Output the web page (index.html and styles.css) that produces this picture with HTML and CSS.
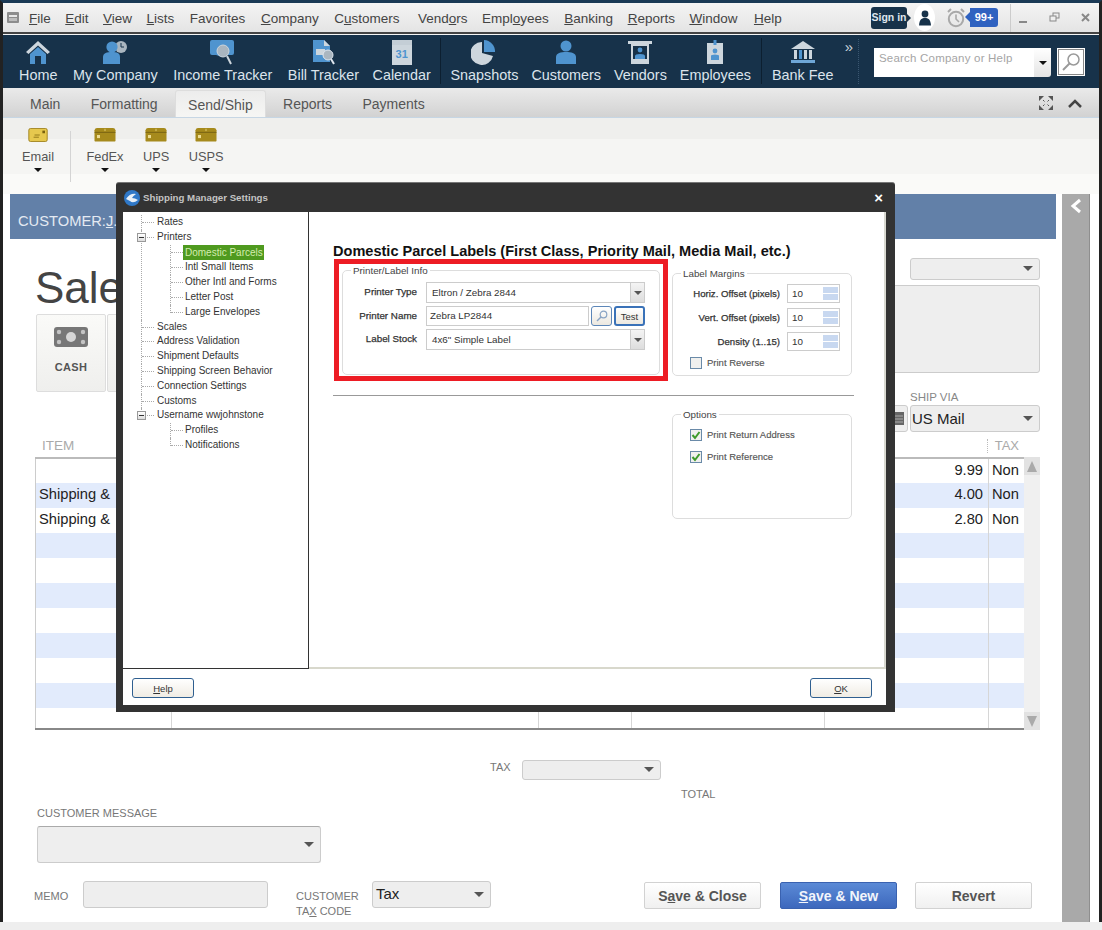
FILE: index.html
```html
<!DOCTYPE html>
<html lang="en">
<head>
    <meta charset="UTF-8">
    <title>Shipping Manager Settings</title>
    <link rel="stylesheet" href="styles.css">
</head>
<body>

<div class="window">
    <!-- menu bar -->
    <div class="menubar">
        <svg class="win-icon" width="12" height="11" viewBox="0 0 12 11"><rect width="12" height="11" rx="1" fill="#8d8d8d"/><rect x="2" y="3" width="8" height="2" fill="#e8e8e8"/><rect x="2" y="6" width="8" height="3" fill="#bdbdbd"/></svg>
        <nav class="menu">
            <span><u>F</u>ile</span>
            <span><u>E</u>dit</span>
            <span><u>V</u>iew</span>
            <span><u>L</u>ists</span>
            <span>Favorites</span>
            <span><u>C</u>ompany</span>
            <span>C<u>u</u>stomers</span>
            <span>Vend<u>o</u>rs</span>
            <span>Empl<u>o</u>yees</span>
            <span><u>B</u>anking</span>
            <span><u>R</u>eports</span>
            <span><u>W</u>indow</span>
            <span><u>H</u>elp</span>
        </nav>
        <div class="menu-right">
            <span class="signin">Sign in</span>
            <span class="avatar">
                <svg width="12" height="16" viewBox="0 0 12 16"><circle cx="6" cy="4" r="3.4" fill="#17324a"/><path d="M0 15.5 C0.5 9 3 8 6 8 S11.5 9 12 15.5 Z" fill="#17324a"/></svg>
            </span>
            <svg class="alarm" width="18" height="20" viewBox="0 0 18 20"><circle cx="9" cy="11" r="7.2" fill="none" stroke="#a9a9a9" stroke-width="2"/><path d="M9 6.5 V11 L12 14" fill="none" stroke="#a9a9a9" stroke-width="1.6"/><path d="M1 4 L4 1 M17 4 L14 1" stroke="#a9a9a9" stroke-width="2"/></svg>
            <span class="badge">99+</span>
            <span class="win-sep"></span>
            <svg class="win-btn" width="78" height="12" viewBox="0 0 78 12"><rect x="4" y="9" width="8" height="2" fill="#888"/><rect x="38" y="1" width="6" height="5" fill="none" stroke="#888"/><rect x="35" y="4" width="6" height="5" fill="#eee" stroke="#888"/><path d="M67 2 L74 9 M74 2 L67 9" stroke="#888" stroke-width="2"/></svg>
        </div>
    </div>

    <!-- icon bar -->
    <div class="iconbar">
        <div class="icon-group">
            <div class="tool">
                <svg width="26" height="25" viewBox="0 0 26 25"><path d="M13 1 L25 12 L22.5 14 L13 5.5 L3.5 14 L1 12 Z" fill="#cdd6dd"/><path d="M5 14 L13 7 L21 14 V24 H16 V16 H10 V24 H5 Z" fill="#4f94cf"/></svg>
                <span>Home</span>
            </div>
            <div class="tool">
                <svg width="26" height="25" viewBox="0 0 26 25"><circle cx="19" cy="7" r="6" fill="#aab6c0"/><path d="M19 3 V7 H22" stroke="#17324a" fill="none"/><circle cx="10" cy="7" r="5.6" fill="#4f94cf"/><path d="M1 24 V17 C1 13 5 12 10 12 S18 13 18 17 V24 Z" fill="#4f94cf"/></svg>
                <span>My Company</span>
            </div>
            <div class="tool">
                <svg width="26" height="25" viewBox="0 0 26 25"><path d="M2 0 H22 Q24 0 24 2 V13 Q24 15 22 15 H18 L12 17 L6 15 H2 Q0 15 0 13 V2 Q0 0 2 0 Z" fill="#4f94cf"/><circle cx="13" cy="11" r="6" fill="#aab6c0" stroke="#cdd6dd"/><path d="M17 16 L21 24" stroke="#cdd6dd" stroke-width="2"/></svg>
                <span>Income Tracker</span>
            </div>
            <div class="tool">
                <svg width="26" height="25" viewBox="0 0 26 25"><path d="M3 0 H14 L20 6 V22 H3 Z" fill="#4f94cf"/><path d="M14 0 L20 6 H14 Z" fill="#cdd6dd"/><rect x="6" y="9" width="9" height="6" fill="#cdd6dd"/><circle cx="18" cy="15" r="5" fill="#aab6c0" stroke="#dfe6ee"/><path d="M21 19 L24 24" stroke="#dfe6ee" stroke-width="2"/></svg>
                <span>Bill Tracker</span>
            </div>
            <div class="tool calendar">
                <div class="calendar-icon">31</div>
                <span>Calendar</span>
            </div>
            <div class="bar-sep"></div>
        </div>
        <div class="icon-group tight">
            <div class="tool">
                <svg width="26" height="25" viewBox="0 0 26 25"><path d="M11 2 A11.5 11.5 0 1 0 22 16 L11 13 Z" fill="#cdd6dd"/><path d="M13 0 A11.5 11.5 0 0 1 24 12 L13 12 Z" fill="#4f94cf"/></svg>
                <span>Snapshots</span>
            </div>
            <div class="tool">
                <svg width="26" height="25" viewBox="0 0 26 25"><circle cx="13" cy="6" r="5.5" fill="#4f94cf"/><path d="M3 24 V17 C3 13 8 12 13 12 S23 13 23 17 V24 Z" fill="#4f94cf"/></svg>
                <span>Customers</span>
            </div>
            <div class="tool">
                <svg width="26" height="25" viewBox="0 0 26 25"><rect x="1" y="1" width="24" height="3" fill="#cdd6dd"/><rect x="4" y="4" width="18" height="20" fill="#cdd6dd"/><rect x="6" y="6" width="14" height="13" fill="#17324a"/><circle cx="13" cy="10" r="2.4" fill="#4f94cf"/><path d="M8 19 V16 Q8 14 13 14 T18 16 V19 Z" fill="#4f94cf"/></svg>
                <span>Vendors</span>
            </div>
            <div class="tool">
                <svg width="26" height="25" viewBox="0 0 26 25"><rect x="5" y="3" width="16" height="21" fill="#cdd6dd"/><rect x="11.5" y="0" width="3" height="5" fill="#4f94cf"/><circle cx="13" cy="11" r="2.4" fill="#4f94cf"/><path d="M9 20 V16 Q9 14.500 13 14.500 T17 16 V20 Z" fill="#4f94cf"/></svg>
                <span>Employees</span>
            </div>
            <div class="bar-sep"></div>
        </div>
        <div class="tool">
            <svg width="26" height="25" viewBox="0 0 26 25"><path d="M13 1 L25 9 H1 Z" fill="#cdd6dd"/><rect x="4" y="10" width="3" height="9" fill="#cdd6dd"/><rect x="9" y="10" width="3" height="9" fill="#4f94cf"/><rect x="14" y="10" width="3" height="9" fill="#cdd6dd"/><rect x="19" y="10" width="3" height="9" fill="#cdd6dd"/><rect x="1" y="20" width="24" height="3" fill="#6ea6d6"/></svg>
            <span>Bank Fee</span>
        </div>
        <div class="more">&raquo;</div>
        <div class="search">
            <div class="search-input">Search Company or Help</div>
            <div class="search-drop"><i class="caret small dark"></i></div>
            <div class="search-go">
                <svg width="20" height="20" viewBox="0 0 20 20"><circle cx="12.500" cy="7.500" r="5.500" fill="none" stroke="#9a9a9a" stroke-width="1.500"/><path d="M8.500 11.500 L2 18" stroke="#9a9a9a" stroke-width="2"/></svg>
            </div>
        </div>
    </div>

    <!-- tabs -->
    <div class="tabs">
        <span class="tab">Main</span>
        <span class="tab">Formatting</span>
        <span class="tab active">Send/Ship</span>
        <span class="tab">Reports</span>
        <span class="tab">Payments</span>
        <div class="tab-tools">
            <svg width="14" height="14" viewBox="0 0 14 14"><path d="M0 0 H5 L0 5 Z M14 0 V5 L9 0 Z M0 14 V9 L5 14 Z M14 14 H9 L14 9 Z" fill="#555"/><path d="M4 4 L5.500 5.500 M10 4 L8.500 5.500 M4 10 L5.500 8.500 M10 10 L8.500 8.500" stroke="#555"/></svg>
            <svg width="14" height="9" viewBox="0 0 14 9"><path d="M1 8 L7 2 L13 8" fill="none" stroke="#444" stroke-width="2.500"/></svg>
        </div>
    </div>

    <!-- ribbon -->
    <div class="ribbon">
        <div class="rb-item">
            <svg width="22" height="16" viewBox="0 0 22 16"><rect x="0.500" y="0.500" width="21" height="15" rx="2" fill="#e6c84e" stroke="#9a7c14"/><rect x="16" y="3" width="3" height="3" fill="#7a6210"/><path d="M7 8 H13 M6 10.500 H12" stroke="#8a7014"/></svg>
            <span>Email</span>
            <i class="caret small dark"></i>
        </div>
        <div class="rb-sep"></div>
        <div class="rb-item">
            <svg width="22" height="16" viewBox="0 0 22 18" preserveAspectRatio="none"><use href="#parcel"/></svg>
            <span>FedEx</span>
            <i class="caret small dark"></i>
        </div>
        <div class="rb-item">
            <svg width="22" height="16" viewBox="0 0 22 18" preserveAspectRatio="none"><use href="#parcel"/></svg>
            <span>UPS</span>
            <i class="caret small dark"></i>
        </div>
        <div class="rb-item">
            <svg width="22" height="16" viewBox="0 0 22 18" preserveAspectRatio="none"><use href="#parcel"/></svg>
            <span>USPS</span>
            <i class="caret small dark"></i>
        </div>
    </div>
    <svg class="defs" width="0" height="0"><defs><g id="parcel"><path d="M3 0 H19 Q21 0 21.500 3 V16 Q21.500 17.500 20 17.500 H2 Q0.500 17.500 0.500 16 V3 Q1 0 3 0 Z" fill="#a68a1c"/><rect x="0.500" y="5" width="21" height="1" fill="#6e5a10"/><rect x="3" y="9" width="3" height="4" fill="#ecdc94"/><rect x="10.500" y="1" width="1" height="3" fill="#e0cc70"/></g></defs></svg>

    <!-- sales receipt form behind the dialog -->
    <div class="main">
        <div class="form">
            <div class="customer-bar">CUSTOMER:<u>J</u>...</div>
            <div class="form-body">
                <div class="top-row">
                    <div class="top-left">
                        <h1 class="title">Sale</h1>
                        <div class="tiles">
                            <div class="tile">
                                <svg width="34" height="20" viewBox="0 0 34 20"><rect width="34" height="20" rx="3" fill="#777"/><circle cx="17" cy="10" r="5" fill="#d6d6d6"/><circle cx="5" cy="5" r="2.200" fill="#c4c4c4"/><circle cx="29" cy="5" r="2.200" fill="#c4c4c4"/><circle cx="5" cy="15" r="2.200" fill="#c4c4c4"/><circle cx="29" cy="15" r="2.200" fill="#c4c4c4"/></svg>
                                <span>CASH</span>
                            </div>
                            <div class="tile"></div>
                        </div>
                    </div>
                    <div class="top-right">
                        <div class="field combo-small"><i class="caret"></i></div>
                        <div class="field address"></div>
                        <div class="ship-label">SHIP VIA</div>
                        <div class="ship-row">
                            <div class="field date-end">
                                <svg width="10" height="13" viewBox="0 0 10 13"><rect width="10" height="13" fill="#666"/><path d="M1 4 H9 M1 7 H9 M1 10 H9" stroke="#aaa"/></svg>
                            </div>
                            <div class="field ship-via">US Mail<i class="caret"></i></div>
                        </div>
                    </div>
                </div>

                <div class="grid-head">
                    <span class="head-item">ITEM</span>
                    <span class="head-tax">TAX</span>
                </div>

                <div class="grid-wrap">
                    <table class="lines">
                        <colgroup>
                            <col class="c1"><col class="c2"><col class="c3"><col class="c4"><col class="c5"><col class="c6">
                        </colgroup>
                        <tr><td></td><td></td><td></td><td></td><td class="num">9.99</td><td>Non</td></tr>
                        <tr><td>Shipping &amp;</td><td></td><td></td><td></td><td class="num">4.00</td><td>Non</td></tr>
                        <tr><td>Shipping &amp;</td><td></td><td></td><td></td><td class="num">2.80</td><td>Non</td></tr>
                        <tr><td></td><td></td><td></td><td></td><td></td><td></td></tr>
                        <tr><td></td><td></td><td></td><td></td><td></td><td></td></tr>
                        <tr><td></td><td></td><td></td><td></td><td></td><td></td></tr>
                        <tr><td></td><td></td><td></td><td></td><td></td><td></td></tr>
                        <tr><td></td><td></td><td></td><td></td><td></td><td></td></tr>
                        <tr><td></td><td></td><td></td><td></td><td></td><td></td></tr>
                        <tr><td></td><td></td><td></td><td></td><td></td><td></td></tr>
                        <tr class="last"><td></td><td></td><td></td><td></td><td></td><td></td></tr>
                    </table>
                    <div class="scroll">
                        <div class="scroll-btn"><i class="tri up"></i></div>
                        <div class="scroll-btn"><i class="tri down"></i></div>
                    </div>
                </div>

                <div class="tax-row">
                    <span class="cap">TAX</span>
                    <div class="field tax-select"><i class="caret"></i></div>
                </div>
                <div class="total-row cap">TOTAL</div>

                <div class="cap msg-label">CUSTOMER MESSAGE</div>
                <div class="field msg-select"><i class="caret"></i></div>

                <div class="foot-row">
                    <span class="cap memo-label">MEMO</span>
                    <div class="field memo"></div>
                    <span class="cap taxcode-label">CUSTOMER<br>TA<u>X</u> CODE</span>
                    <div class="field taxcode">Tax<i class="caret"></i></div>
                    <div class="foot-btns">
                        <button class="btn">S<u>a</u>ve &amp; Close</button>
                        <button class="btn primary"><u>S</u>ave &amp; New</button>
                        <button class="btn revert">Revert</button>
                    </div>
                </div>
            </div>
        </div>
        <div class="side-panel">
            <svg width="12" height="16" viewBox="0 0 12 16"><path d="M10 2 L3 8 L10 14" fill="none" stroke="#fff" stroke-width="3"/></svg>
        </div>
    </div>
</div>

<!-- dialog -->
<div class="dialog">
    <div class="dlg-title">
        <svg width="16" height="16" viewBox="0 0 16 16"><circle cx="8" cy="8" r="8" fill="#2f78c8"/><path d="M2 9 Q6 3 12 4 Q9 6 8 8 Q11 8 14 10 Q9 14 6 11 Q4 10 2 9 Z" fill="#e8f0f8"/></svg>
        <span>Shipping Manager Settings</span>
        <b class="dlg-close">&times;</b>
    </div>
    <div class="dlg-body">
        <div class="dlg-main">
            <div class="tree-pane">
                <ul class="tree">
                    <li>Rates</li>
                    <li><i class="exp"></i>Printers
                        <ul>
                            <li><span class="selected">Domestic Parcels</span></li>
                            <li>Intl Small Items</li>
                            <li>Other Intl and Forms</li>
                            <li>Letter Post</li>
                            <li>Large Envelopes</li>
                        </ul>
                    </li>
                    <li>Scales</li>
                    <li>Address Validation</li>
                    <li>Shipment Defaults</li>
                    <li>Shipping Screen Behavior</li>
                    <li>Connection Settings</li>
                    <li>Customs</li>
                    <li><i class="exp"></i>Username wwjohnstone
                        <ul>
                            <li>Profiles</li>
                            <li>Notifications</li>
                        </ul>
                    </li>
                </ul>
            </div>
            <div class="settings-pane">
                <h2 class="settings-title">Domestic Parcel Labels (First Class, Priority Mail, Media Mail, etc.)</h2>
                <div class="groups">
                    <fieldset class="group printer-group">
                        <legend>Printer/Label Info</legend>
                        <div class="printer-grid">
                            <label>Printer Type</label>
                            <div class="dd">Eltron / Zebra 2844<span class="dd-btn"><i class="caret small"></i></span></div>
                            <label>Printer Name</label>
                            <div class="name-row">
                                <div class="txt">Zebra LP2844</div>
                                <div class="mini-btn">
                                    <svg width="12" height="12" viewBox="0 0 12 12"><circle cx="7.500" cy="4.500" r="3.300" fill="none" stroke="#8aa4c4" stroke-width="1.200"/><path d="M5 7 L1 11" stroke="#8aa4c4" stroke-width="1.500"/></svg>
                                </div>
                                <div class="mini-btn test">Test</div>
                            </div>
                            <label>Label Stock</label>
                            <div class="dd">4x6" Simple Label<span class="dd-btn"><i class="caret small"></i></span></div>
                        </div>
                    </fieldset>
                    <fieldset class="group margin-group">
                        <legend>Label Margins</legend>
                        <div class="margin-grid">
                            <label>Horiz. Offset (pixels)</label>
                            <div class="spin">10<span class="spin-btn"></span></div>
                            <label>Vert. Offset (pixels)</label>
                            <div class="spin">10<span class="spin-btn"></span></div>
                            <label>Density (1..15)</label>
                            <div class="spin">10<span class="spin-btn"></span></div>
                        </div>
                        <div class="check"><span class="box"></span>Print Reverse</div>
                    </fieldset>
                </div>
                <div class="pane-rule"></div>
                <fieldset class="group options-group">
                    <legend>Options</legend>
                    <div class="check"><span class="box"><svg width="10" height="10" viewBox="0 0 10 10"><path d="M1.500 5 L4 8 L8.500 2" fill="none" stroke="#3d9a2a" stroke-width="2"/></svg></span>Print Return Address</div>
                    <div class="check"><span class="box"><svg width="10" height="10" viewBox="0 0 10 10"><path d="M1.500 5 L4 8 L8.500 2" fill="none" stroke="#3d9a2a" stroke-width="2"/></svg></span>Print Reference</div>
                </fieldset>
            </div>
        </div>
        <div class="dlg-foot">
            <button class="dlg-btn"><u>H</u>elp</button>
            <button class="dlg-btn"><u>O</u>K</button>
        </div>
    </div>
    <div class="callout"></div>
</div>

</body>
</html>
```

FILE: styles.css
```css
* {
    box-sizing: border-box;
}
html, body {
    margin: 0;
    padding: 0;
}
body {
    width: 1102px;
    height: 930px;
    overflow: hidden;
    position: relative;
    background: #eee;
    font-family: "Liberation Sans", Arial, sans-serif;
    color: #333;
}
.window {
    width: 1102px;
    height: 922px;
    border-top: 3px solid #1b3a56;
    border-left: 3px solid #222;
    border-right: 3px solid #222;
    display: flex;
    flex-direction: column;
    background: #fff;
}
.defs {
    position: absolute;
}

/* carets */
.caret {
    display: block;
    width: 0;
    height: 0;
    border-left: 5px solid transparent;
    border-right: 5px solid transparent;
    border-top: 5px solid #555;
}
.caret.small {
    border-left-width: 4px;
    border-right-width: 4px;
    border-top-width: 4px;
}
.caret.dark {
    border-top-color: #111;
}

/* menu bar */
.menubar {
    height: 31px;
    flex: none;
    display: flex;
    align-items: center;
    padding-left: 4px;
    background: linear-gradient(#f4f4f4, #e4e4e4);
    border-bottom: 2px solid #444;
}
.win-icon {
    flex: none;
}
.menu {
    display: flex;
    gap: 14.5px;
    margin-left: 10px;
    padding-top: 1px;
    font-size: 13.5px;
    color: #444;
}
.menu span:nth-child(4),
.menu span:nth-child(5),
.menu span:nth-child(6),
.menu span:nth-child(9) {
    margin-right: 1px;
}
.menu span:nth-child(7) {
    margin-right: 4px;
}
.menu span:nth-child(12) {
    margin-right: 2px;
}
.menu-right {
    margin-left: auto;
    padding-right: 6px;
    display: flex;
    align-items: center;
    height: 100%;
}
.signin {
    background: #17324a;
    color: #dfe6ee;
    font-size: 10.5px;
    font-weight: bold;
    width: 36px;
    height: 22px;
    line-height: 21px;
    text-align: center;
    border-radius: 3px;
    position: relative;
}
.signin::after {
    content: "";
    position: absolute;
    right: -4px;
    top: 7px;
    border-left: 4px solid #17324a;
    border-top: 4px solid transparent;
    border-bottom: 4px solid transparent;
}
.avatar {
    width: 21px;
    height: 27px;
    margin-left: 7px;
    border-radius: 50%;
    background: #fff;
    display: flex;
    align-items: center;
    justify-content: center;
}
.alarm {
    margin-left: 12px;
}
.badge {
    background: #2f62c0;
    color: #fff;
    font-size: 11px;
    font-weight: bold;
    width: 28px;
    height: 19px;
    line-height: 18px;
    text-align: center;
    border-radius: 0 3px 3px 0;
    margin-left: 5px;
    position: relative;
}
.badge::before {
    content: "";
    position: absolute;
    left: -5px;
    top: 4px;
    border-right: 5px solid #2f62c0;
    border-top: 5px solid transparent;
    border-bottom: 5px solid transparent;
}
.win-sep {
    width: 1px;
    height: 28px;
    background: #ccc;
    margin-left: 12px;
}
.win-btn {
    margin-left: 4px;
}

/* icon bar */
.iconbar {
    height: 54px;
    flex: none;
    padding: 0 14px 0 16px;
    display: flex;
    align-items: flex-start;
    background: #17324a;
    border-top: 1px solid #f4f4f4;
}
.icon-group {
    display: flex;
    gap: 15.5px;
    margin-right: 9px;
}
.icon-group.tight {
    gap: 13px;
    margin-right: 10px;
}
.tool {
    display: flex;
    flex-direction: column;
    align-items: center;
    padding-top: 5px;
    font-size: 14.4px;
    color: #dce4ec;
    white-space: nowrap;
}
.tool.calendar {
    margin-left: -2px;
}
.tool span {
    margin-top: 1px;
    line-height: 18px;
}
.calendar-icon {
    width: 20px;
    height: 25px;
    border-top: 5px solid #c4ced6;
    background: #cdd6dd;
    color: #4f94cf;
    font-size: 11px;
    font-weight: bold;
    line-height: 19px;
    text-align: center;
}
.bar-sep {
    width: 1px;
    height: 46px;
    margin: 3px 0 0 -6px;
    background: #0c1f30;
}
.tight .bar-sep {
    margin-left: -3px;
}
.more {
    color: #c9d2da;
    font-size: 15px;
    line-height: 16px;
    margin: 4px 0 0 11px;
    width: 14px;
    height: 45px;
    border-right: 1px dotted #3a5670;
}
.search {
    margin: 13px 0 0 auto;
    display: flex;
}
.search-input {
    width: 160px;
    height: 29px;
    background: #fff;
    color: #a5a5a5;
    font-size: 11.5px;
    padding: 4px 5px;
    letter-spacing: 0.2px;
}
.search-drop {
    width: 17px;
    height: 29px;
    background: linear-gradient(#fff, #e4e4e4);
    border-radius: 0 0 3px 0;
    display: flex;
    align-items: center;
    justify-content: center;
}
.search-go {
    width: 28px;
    height: 28px;
    margin-left: 6px;
    background: #fff;
    outline: 1px solid #888;
    outline-offset: -2px;
    display: flex;
    align-items: center;
    justify-content: center;
}

/* tabs */
.tabs {
    height: 30px;
    flex: none;
    padding: 2px 17px 0 14px;
    display: flex;
    gap: 4.4px;
    background: linear-gradient(#eaeaea, #d2d2d2);
    border-bottom: 1px solid #c6d6e4;
}
.tab {
    padding: 0 13px;
    font-size: 14px;
    line-height: 29px;
    color: #555;
}
.tab.active {
    background: linear-gradient(#ececec, #f6f6f4);
    border: 1px solid #ddd;
    border-bottom: none;
    border-radius: 3px 3px 0 0;
    padding: 0 12px;
    line-height: 28px;
}
.tab-tools {
    margin-left: auto;
    display: flex;
    align-items: center;
    gap: 15px;
    height: 26px;
}

/* ribbon */
.ribbon {
    height: 76px;
    flex: none;
    padding: 10px 0 0 19px;
    display: flex;
    background: linear-gradient(#efefed 0, #efefed 21px, #f5f5f3 21px, #f5f5f3 56px, #fafaf8 56px);
}
.rb-item {
    display: flex;
    flex-direction: column;
    align-items: center;
    margin-right: 19.5px;
    font-size: 12.8px;
    color: #555;
    height: 44px;
}
.rb-item span {
    margin-top: 7px;
    line-height: 15px;
}
.rb-item .caret {
    margin-top: 4px;
}
.rb-sep {
    width: 1px;
    height: 51px;
    margin: 3px 16px 0 -4px;
    background: #d4d4d4;
}

/* main form */
.main {
    flex: 1;
    display: flex;
    min-height: 0;
}
.form {
    flex: 1;
    min-width: 0;
}
.customer-bar {
    height: 45px;
    margin-left: 7px;
    padding: 19px 0 0 8px;
    background: #6280a8;
    color: #e4eaf2;
    font-size: 14.7px;
    line-height: 16px;
}
.form-body {
    padding: 0 16px 0 32px;
}
.top-row {
    display: flex;
    justify-content: space-between;
    height: 193px;
}
.title {
    margin: 24px 0 0 0;
    font-size: 44px;
    font-weight: normal;
    line-height: 50px;
    color: #444;
}
.tiles {
    display: flex;
    gap: 1px;
    margin: 1px 0 0 1px;
}
.tile {
    width: 70px;
    height: 78px;
    padding-top: 12px;
    background: linear-gradient(#fafaf8, #efefed);
    border: 1px solid #ddd;
    border-radius: 2px;
    display: flex;
    flex-direction: column;
    align-items: center;
    font-size: 11px;
    font-weight: bold;
    letter-spacing: 0.3px;
    color: #555;
}
.tile span {
    margin-top: 14px;
}
.top-right {
    width: 150px;
    padding-top: 19px;
}
.field {
    background: #eee;
    border: 1px solid #ccc;
    border-radius: 3px;
    position: relative;
    font-size: 15px;
    color: #222;
}
.field .caret {
    position: absolute;
    right: 6px;
    top: 50%;
    margin-top: -3px;
}
.combo-small {
    width: 130px;
    height: 22px;
    margin-left: 20px;
}
.address {
    height: 88px;
    margin-top: 5px;
}
.ship-label {
    margin-top: 17px;
    margin-left: 20px;
    font-size: 11.5px;
    line-height: 14px;
    color: #888;
}
.ship-row {
    display: flex;
    gap: 2px;
    margin-top: 1px;
}
.date-end {
    width: 18px;
    height: 27px;
    display: flex;
    align-items: center;
    justify-content: center;
}
.ship-via {
    width: 130px;
    height: 27px;
    line-height: 25px;
    padding-left: 1px;
}
.grid-head {
    display: flex;
    justify-content: space-between;
    height: 25px;
    padding: 6px 21px 0 7px;
    color: #aaa;
    font-size: 13.5px;
    line-height: 16px;
}
.head-tax {
    font-size: 13px;
    border-left: 1px dotted #bbb;
    padding-left: 7px;
    height: 14px;
    line-height: 14px;
    margin-top: 1px;
}
.grid-wrap {
    display: flex;
    height: 273px;
}
.lines {
    width: 988px;
    height: 273px;
    table-layout: fixed;
    border-collapse: collapse;
    border-top: 2px solid #bbb;
    border-left: 1px solid #ccc;
    border-bottom: 2px solid #888;
    font-size: 14.7px;
    color: #222;
}
.lines .c1 { width: 136px; }
.lines .c2 { width: 367px; }
.lines .c3 { width: 93px; }
.lines .c4 { width: 193px; }
.lines .c5 { width: 164px; }
.lines .c6 { width: 35px; }
.lines td {
    height: 25px;
    padding: 0 3px 3px 3px;
    border-left: 1px solid #d6d6d6;
    white-space: nowrap;
}
.lines td:first-child {
    border-left: none;
}
.lines tr:nth-child(even) {
    background: #e2ebfc;
}
.lines tr.last td {
    height: 21px;
}
.lines .num {
    text-align: right;
    padding-right: 5px;
}
.scroll {
    flex: 1;
    background: #f0f0f0;
    display: flex;
    flex-direction: column;
    justify-content: space-between;
}
.scroll-btn {
    height: 18px;
    background: #e2e2e2;
    display: flex;
    align-items: center;
    justify-content: center;
}
.tri {
    width: 0;
    height: 0;
    border-left: 5.5px solid transparent;
    border-right: 5.5px solid transparent;
}
.tri.up {
    border-bottom: 11px solid #aaa;
}
.tri.down {
    border-top: 11px solid #aaa;
}
.cap {
    font-size: 11px;
    color: #777;
}
.tax-row {
    display: flex;
    align-items: flex-start;
    margin: 30px 0 0 455px;
    height: 20px;
}
.tax-row .cap {
    width: 32px;
    line-height: 14px;
}
.tax-select {
    width: 139px;
    height: 20px;
}
.total-row {
    margin: 8px 0 0 646px;
    line-height: 12px;
}
.msg-label {
    margin: 7px 0 0 2px;
    line-height: 12px;
}
.msg-select {
    width: 284px;
    height: 37px;
    margin: 7px 0 0 2px;
    border-top-color: #aaa;
}
.foot-row {
    display: flex;
    align-items: flex-start;
    margin-top: 18px;
}
.memo-label {
    width: 49px;
    line-height: 12px;
    margin: 9px 0 0 -1px;
}
.memo {
    width: 185px;
    height: 27px;
}
.taxcode-label {
    width: 76px;
    margin: 8px 0 0 28px;
    line-height: 14.5px;
}
.taxcode {
    width: 119px;
    height: 27px;
    padding-left: 3px;
    line-height: 24px;
}
.foot-btns {
    display: flex;
    gap: 19px;
    margin: 1px 0 0 153px;
}
.btn {
    width: 117px;
    height: 27px;
    padding: 0;
    font-family: inherit;
    font-size: 14px;
    font-weight: bold;
    color: #555;
    background: linear-gradient(#fff, #f0f0f0);
    border: 1px solid #d2d2d2;
    border-radius: 2px;
}
.btn.primary {
    background: linear-gradient(#5b8ad6, #3d68bd);
    border-color: #3a62b0;
    color: #f2f5fb;
}
.btn.revert {
    margin-left: -1px;
}
.side-panel {
    flex: none;
    width: 28px;
    margin: 0 9px 0 6px;
    padding: 4px 0 0 8px;
    background: #a9a9a9;
    border-right: 1px solid #8e8e8e;
}

/* dialog */
.dialog {
    position: absolute;
    left: 116px;
    top: 182px;
    width: 779px;
    height: 530px;
    padding: 0 9px 7px 7px;
    background: #333;
    border-top: 1px solid #777;
    border-radius: 3px 3px 0 0;
    display: flex;
    flex-direction: column;
}
.dlg-title {
    height: 29px;
    flex: none;
    display: flex;
    align-items: center;
    margin-left: 1px;
    color: #c4c4c4;
    font-size: 9.7px;
    font-weight: bold;
}
.dlg-title span {
    margin-left: 3px;
}
.dlg-close {
    margin-left: auto;
    margin-right: 3px;
    font-size: 15px;
    color: #fff;
}
.dlg-body {
    flex: 1;
    background: #fff;
    display: flex;
    flex-direction: column;
    min-height: 0;
}
.dlg-main {
    height: 457px;
    display: flex;
    flex: none;
}
.tree-pane {
    width: 186px;
    flex: none;
    border-right: 1px solid #333;
    border-bottom: 1px solid #333;
    padding-top: 3px;
}
.tree, .tree ul {
    list-style: none;
    margin: 0;
    padding: 0;
}
.tree {
    margin-left: 18px;
    font-size: 10px;
    line-height: 14.8px;
    color: #333;
}
.tree li {
    position: relative;
    padding-left: 16px;
    white-space: nowrap;
}
.tree ul {
    margin-left: 13px;
}
.tree ul li {
    padding-left: 15px;
}
.tree li::before {
    content: "";
    position: absolute;
    left: 0;
    top: 0;
    bottom: 0;
    border-left: 1px dotted #aaa;
}
.tree li:last-child::before {
    bottom: auto;
    height: 8px;
}
.tree li::after {
    content: "";
    position: absolute;
    left: 1px;
    top: 7px;
    width: 12px;
    border-top: 1px dotted #aaa;
}
.exp {
    position: absolute;
    z-index: 1;
    left: -4px;
    top: 3px;
    width: 9px;
    height: 9px;
    background: linear-gradient(#fff, #ddd);
    border: 1px solid #999;
}
.exp::after {
    content: "";
    position: absolute;
    left: 1px;
    top: 3px;
    width: 5px;
    height: 1px;
    background: #333;
}
.selected {
    display: inline-block;
    margin-left: -2px;
    padding: 0 2px;
    background: #4f9a1f;
    color: #d4ecae;
    line-height: 15px;
    width: 81px;
}
.settings-pane {
    flex: 1;
    padding-left: 24px;
    border-bottom: 2px solid #d8d8cc;
    border-right: 2px solid #d8d8d0;
}
.settings-title {
    margin: 31px 0 0 0;
    font-size: 14.55px;
    font-weight: bold;
    line-height: 16px;
    color: #111;
    white-space: nowrap;
}
.groups {
    display: flex;
    align-items: flex-start;
    gap: 12px;
    margin: 6px 0 0 9px;
}
.group {
    margin: 0;
    padding: 0;
    border: 1px solid #ddd;
    border-radius: 5px;
    min-width: 0;
}
.group legend {
    margin-left: 8px;
    padding: 0 2px;
    font-size: 9.8px;
    line-height: 11px;
    color: #444;
}
.printer-group {
    width: 318px;
    height: 110px;
}
.printer-grid {
    display: grid;
    grid-template-columns: 74px 219px;
    column-gap: 9px;
    row-gap: 3px;
    margin-top: 6px;
}
.printer-grid label, .margin-grid label {
    text-align: right;
    font-size: 9.8px;
    line-height: 20px;
    color: #333;
    white-space: nowrap;
    -webkit-text-stroke: 0.25px #333;
}
.margin-grid label {
    font-size: 9.6px;
}
.dd {
    height: 21px;
    padding-left: 5px;
    line-height: 19px;
    font-size: 9.8px;
    color: #333;
    background: #fff;
    border: 1px solid #ccc;
    position: relative;
}
.dd-btn {
    position: absolute;
    right: 0;
    top: 0;
    bottom: 0;
    width: 14px;
    background: linear-gradient(#f4f4f4, #ddd);
    border-left: 1px solid #ccc;
    display: flex;
    align-items: center;
    justify-content: center;
}
.name-row {
    display: flex;
    height: 20px;
    margin-bottom: -1px;
}
.txt {
    width: 163px;
    padding-left: 3px;
    border: 1px solid #ccc;
    font-size: 9.8px;
    line-height: 18px;
}
.mini-btn {
    width: 21px;
    margin-left: 2px;
    border: 1px solid #5c86b8;
    border-radius: 3px;
    background: linear-gradient(#fff, #ece8e0);
    display: flex;
    align-items: center;
    justify-content: center;
}
.mini-btn.test {
    width: 31px;
    border: 2px solid #3a72b8;
    font-size: 9.5px;
}
.margin-group {
    width: 180px;
    height: 108px;
    margin-top: 3px;
}
.margin-grid {
    display: grid;
    grid-template-columns: 107px 53px;
    column-gap: 7px;
    row-gap: 4px;
    margin-top: 5px;
}
.spin {
    height: 19px;
    padding-left: 4px;
    font-size: 9.8px;
    line-height: 17px;
    border: 1px solid #ccc;
    position: relative;
}
.spin-btn {
    position: absolute;
    right: 1px;
    top: 2px;
    width: 15px;
    height: 13px;
    background: linear-gradient(#c8d8f0 0, #c8d8f0 45%, #fff 45%, #fff 55%, #c8d8f0 55%);
}
.check {
    display: flex;
    align-items: center;
    margin: 5px 0 0 17px;
    font-size: 9.5px;
    line-height: 12px;
    color: #555;
    -webkit-text-stroke: 0.15px #555;
}
.box {
    width: 12px;
    height: 12px;
    margin-right: 5px;
    border: 1px solid #6a8aa8;
    background: #f0f0ee;
    display: flex;
    align-items: center;
    justify-content: center;
}
.pane-rule {
    width: 521px;
    height: 1px;
    margin-top: 19px;
    background: #999;
}
.options-group {
    width: 180px;
    height: 110px;
    margin: 13px 0 0 339px;
}
.options-group .check {
    margin-top: 9px;
}
.options-group .check + .check {
    margin-top: 10px;
}
.dlg-foot {
    flex: 1;
    display: flex;
    justify-content: space-between;
    padding: 9px 14px 0 9px;
}
.dlg-btn {
    width: 62px;
    height: 20px;
    padding: 0;
    font-family: inherit;
    font-size: 9.5px;
    color: #333;
    background: linear-gradient(#fff, #f0ece4);
    border: 1px solid #2f5f90;
    border-radius: 3px;
}
.callout {
    position: absolute;
    left: 218px;
    top: 76px;
    width: 334px;
    height: 122px;
    border: 5px solid #ed1c24;
}
```
